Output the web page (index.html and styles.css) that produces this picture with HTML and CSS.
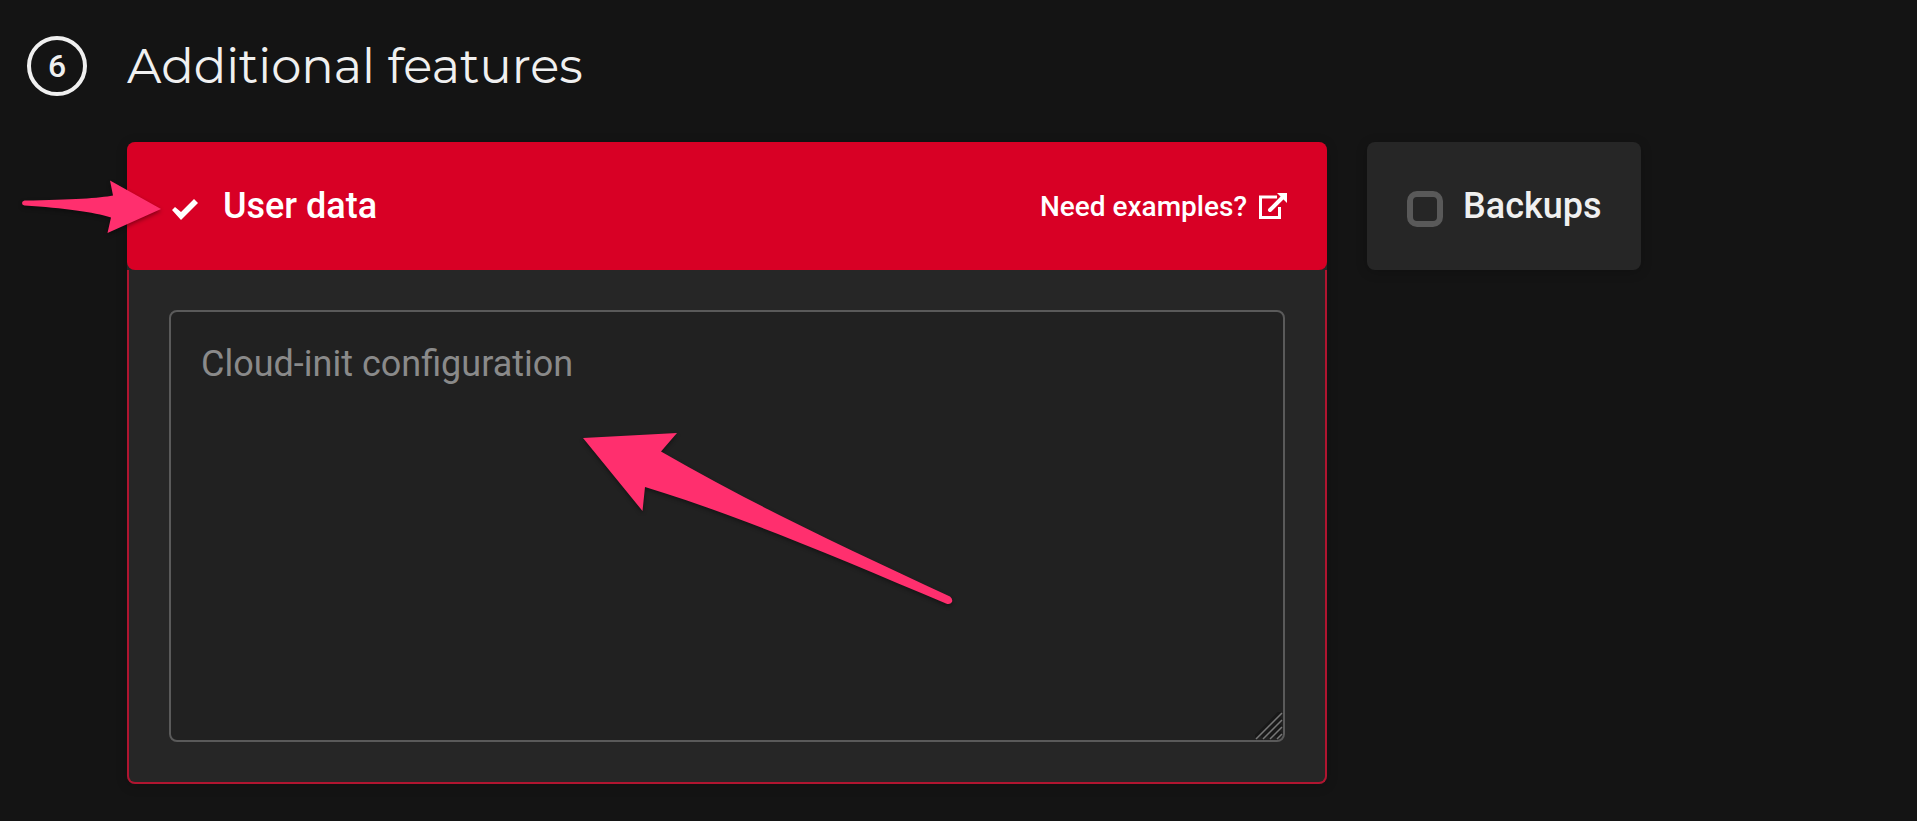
FILE: index.html
```html
<!DOCTYPE html>
<html lang="en">
<head>
<meta charset="utf-8">
<title>Additional features</title>
<link rel="stylesheet" href="styles.css">
</head>
<body>
<main class="step">
  <header class="step-header">
    <span class="step-number">6</span>
    <h2 class="step-title">Additional features</h2>
  </header>
  <div class="features">
    <section class="feature feature-selected">
      <div class="feature-head">
        <label class="option"><input class="option-box" type="checkbox" checked><span>User data</span></label>
        <a class="examples" href="#examples">Need examples?
          <svg class="examples-icon" viewBox="0 0 28 26" aria-hidden="true"><path d="M18 4H1.5V24.500H20.500V14" fill="none" stroke="currentColor" stroke-width="3"/><path d="M11 17L23 5" fill="none" stroke="currentColor" stroke-width="4" stroke-linecap="round"/><path d="M18 0H28V10Z" fill="currentColor"/></svg>
        </a>
      </div>
      <div class="feature-body">
        <textarea class="config" aria-label="Cloud-init configuration" placeholder="Cloud-init configuration"></textarea>
        <svg class="grip" viewBox="0 0 28 28" aria-hidden="true"><path d="M1 27L27 1M8 27L27 8M15 27L27 15M22 27L27 22" stroke="#181818" stroke-width="3" transform="translate(-1 -2)"/><path d="M1 27L27 1M8 27L27 8M15 27L27 15M22 27L27 22" stroke="#777" stroke-width="1.500"/></svg>
      </div>
      <svg class="arrow arrow-option" viewBox="0 0 140 54" aria-hidden="true"><path d="M139 29L88 0.500L91 15.500C78 18 50 20 2.500 20.500Q0 21 0 23Q0 25 2.500 25.500C42 28 72 32 89 37.500L85.500 53Z"/></svg>
      <svg class="arrow arrow-config" viewBox="0 0 370 172" aria-hidden="true"><path d="M0 5L94 0L78 18.500C170 72 270 118 367 163.500Q370 166 369 169Q367 172 363 170.500C260 127 160 84 62 54L59.500 78Z"/></svg>
    </section>
    <section class="feature">
      <div class="feature-head">
        <label class="option"><input class="option-box" type="checkbox"><span>Backups</span></label>
      </div>
    </section>
  </div>
</main>
</body>
</html>
```
FILE: styles.css
```css
* { box-sizing: border-box; }
body {
  margin: 0;
  background: #141414;
  color: #f0f0f0;
  font-family: Roboto, "Liberation Sans", sans-serif;
}
.step { padding: 36px 27px; }
.step-header {
  display: flex;
  align-items: center;
  gap: 40px;
}
.step-number {
  display: flex;
  align-items: center;
  justify-content: center;
  width: 60px;
  height: 60px;
  border: 4px solid #f0f0f0;
  border-radius: 50%;
  font-size: 32px;
  font-weight: 500;
}
.step-title {
  margin: 0;
  font-family: Montserrat, Lato, sans-serif;
  font-size: 48px;
  font-weight: 400;
  line-height: 60px;
}
.features {
  display: flex;
  align-items: flex-start;
  gap: 40px;
  margin: 46px 0 0 100px;
}
.feature {
  position: relative;
  border-radius: 8px;
  background: #262626;
  box-shadow: 0 2px 12px rgba(0, 0, 0, 0.2);
}
.feature-selected { flex: 0 1 1200px; }
.feature-head {
  display: flex;
  align-items: center;
  justify-content: space-between;
  height: 128px;
  padding: 0 40px;
  border-radius: 8px;
}
.feature-selected .feature-head {
  background: #d80025;
  color: #fff;
}
.option {
  display: flex;
  align-items: center;
  gap: 20px;
  font-size: 36px;
  font-weight: 500;
  line-height: 48px;
}
.option-box {
  appearance: none;
  width: 36px;
  height: 36px;
  margin: 6px 0 0;
  border: 6px solid #595959;
  border-radius: 10px;
}
.option-box:checked {
  border: 0;
  border-radius: 0;
  background: #fff;
  clip-path: polygon(5px 19px, 8px 16px, 14px 21px, 27px 8px, 31px 12px, 14px 29px);
}
.examples {
  display: flex;
  align-items: center;
  gap: 12px;
  color: inherit;
  font-size: 28px;
  font-weight: 500;
  text-decoration: none;
}
.examples-icon {
  width: 28px;
  height: 26px;
}
.feature-body {
  position: relative;
  padding: 40px;
  border: 2px solid #b01530;
  border-top: 0;
  border-radius: 0 0 8px 8px;
}
.config {
  display: block;
  width: 100%;
  height: 432px;
  padding: 28px 30px;
  border: 2px solid #5a5a5a;
  border-radius: 8px;
  outline: 0;
  background: #212121;
  color: #f0f0f0;
  font: 400 36px/48px Roboto, "Liberation Sans", sans-serif;
  resize: none;
}
.config::placeholder {
  color: #8a8a8a;
  opacity: 1;
}
.grip {
  position: absolute;
  right: 42px;
  bottom: 42px;
  width: 28px;
  height: 28px;
}
.arrow {
  position: absolute;
  overflow: visible;
  fill: #ff2f6e;
  filter: drop-shadow(0 2px 2px rgba(0, 0, 0, 0.4));
  pointer-events: none;
}
.arrow-option {
  top: 38px;
  left: -105px;
  width: 140px;
  height: 54px;
}
.arrow-config {
  top: 291px;
  left: 456px;
  width: 370px;
  height: 172px;
}
```
